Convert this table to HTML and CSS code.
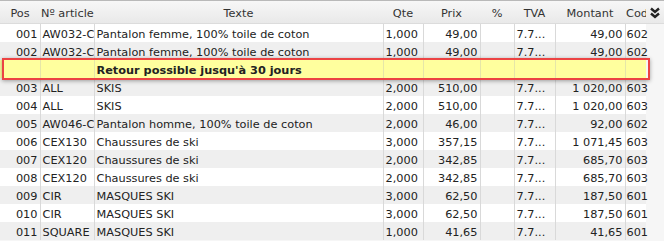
FILE: index.html
```html
<!DOCTYPE html>
<html lang="fr">
<head>
<meta charset="utf-8">
<link rel="stylesheet" href="styles.css">
</head>
<body>
<div class="grid">
  <div class="head">
    <table class="tbl">
      <colgroup><col class="c-pos"><col class="c-art"><col class="c-txt"><col class="c-qte"><col class="c-prix"><col class="c-pct"><col class="c-tva"><col class="c-mnt"><col class="c-code"></colgroup>
      <tr>
        <th>Pos</th><th class="l">Nº article</th><th>Texte</th><th>Qte</th><th>Prix</th><th>%</th><th>TVA</th><th>Montant</th><th class="l">Code</th>
      </tr>
    </table>
    <div class="menu">
      <svg width="12" height="12" viewBox="0 0 12 12"><path d="M2 1.5 L6 5 L10 1.5" fill="none" stroke="#222" stroke-width="2.4"/><path d="M2 6.5 L6 10 L10 6.5" fill="none" stroke="#222" stroke-width="2.4"/></svg>
    </div>
  </div>
  <div class="body">
    <table class="tbl">
      <colgroup><col class="c-pos"><col class="c-art"><col class="c-txt"><col class="c-qte"><col class="c-prix"><col class="c-pct"><col class="c-tva"><col class="c-mnt"><col class="c-code"></colgroup>
      <tr><td class="r">001</td><td>AW032-C</td><td>Pantalon femme, 100% toile de coton</td><td>1,000</td><td class="r">49,00</td><td></td><td>7.7...</td><td class="r">49,00</td><td class="code">602</td></tr>
      <tr class="alt"><td class="r">002</td><td>AW032-C</td><td>Pantalon femme, 100% toile de coton</td><td>1,000</td><td class="r">49,00</td><td></td><td>7.7...</td><td class="r">49,00</td><td class="code">602</td></tr>
      <tr class="note"><td></td><td></td><td class="b">Retour possible jusqu'à 30 jours</td><td></td><td></td><td></td><td></td><td></td><td class="code"></td></tr>
      <tr class="alt"><td class="r">003</td><td>ALL</td><td>SKIS</td><td>2,000</td><td class="r">510,00</td><td></td><td>7.7...</td><td class="r">1 020,00</td><td class="code">603</td></tr>
      <tr><td class="r">004</td><td>ALL</td><td>SKIS</td><td>2,000</td><td class="r">510,00</td><td></td><td>7.7...</td><td class="r">1 020,00</td><td class="code">603</td></tr>
      <tr class="alt"><td class="r">005</td><td>AW046-C</td><td>Pantalon homme, 100% toile de coton</td><td>2,000</td><td class="r">46,00</td><td></td><td>7.7...</td><td class="r">92,00</td><td class="code">602</td></tr>
      <tr><td class="r">006</td><td>CEX130</td><td>Chaussures de ski</td><td>3,000</td><td class="r">357,15</td><td></td><td>7.7...</td><td class="r">1 071,45</td><td class="code">603</td></tr>
      <tr class="alt"><td class="r">007</td><td>CEX120</td><td>Chaussures de ski</td><td>2,000</td><td class="r">342,85</td><td></td><td>7.7...</td><td class="r">685,70</td><td class="code">603</td></tr>
      <tr><td class="r">008</td><td>CEX120</td><td>Chaussures de ski</td><td>2,000</td><td class="r">342,85</td><td></td><td>7.7...</td><td class="r">685,70</td><td class="code">603</td></tr>
      <tr class="alt"><td class="r">009</td><td>CIR</td><td>MASQUES SKI</td><td>3,000</td><td class="r">62,50</td><td></td><td>7.7...</td><td class="r">187,50</td><td class="code">601</td></tr>
      <tr><td class="r">010</td><td>CIR</td><td>MASQUES SKI</td><td>3,000</td><td class="r">62,50</td><td></td><td>7.7...</td><td class="r">187,50</td><td class="code">601</td></tr>
      <tr class="alt"><td class="r">011</td><td>SQUARE</td><td>MASQUES SKI</td><td>1,000</td><td class="r">41,65</td><td></td><td>7.7...</td><td class="r">41,65</td><td class="code">601</td></tr>
    </table>
    <div class="highlight"></div>
  </div>
</div>
</body>
</html>
```
FILE: styles.css
```css
html, body { margin: 0; padding: 0; background: #f6f6f6; }
.grid {
  width: 664px;
  height: 241px;
  overflow: hidden;
  font-family: "DejaVu Sans", Verdana, sans-serif;
  font-size: 11.3px;
  color: #222;
  background: #f6f6f6;
}
.head {
  display: flex;
  height: 24px;
  border-top: 1px solid #b9b9b9;
  box-sizing: border-box;
  background: linear-gradient(#f7f7f7, #e9e9e9);
  border-bottom: 1px solid #dcdcdc;
}
.menu {
  flex: 1;
  display: flex;
  justify-content: center;
  padding-top: 6px;
}
.tbl {
  table-layout: fixed;
  border-collapse: collapse;
  width: 646px;
}
.c-pos { width: 40px; }
.c-art { width: 54px; }
.c-txt { width: 289px; }
.c-qte { width: 40px; }
.c-prix { width: 57px; }
.c-pct { width: 34px; }
.c-tva { width: 41px; }
.c-mnt { width: 70px; }
.c-code { width: 21px; }
th {
  height: 20px;
  padding: 2px 2px 0;
  font-weight: normal;
  color: #333;
  white-space: nowrap;
  overflow: hidden;
  text-align: center;
}
th.l { text-align: left; padding-left: 1px; }
td {
  height: 15px;
  padding: 3px 2px 0;
  white-space: nowrap;
  overflow: hidden;
  text-overflow: clip;
  border-left: 1px solid #d9d9d9;
  background: #fff;
  line-height: 15px;
}
td:first-child { border-left: none; }
td.r { text-align: right; }
td.b { font-weight: bold; }
td.code { padding-left: 1px; padding-right: 0; overflow: visible; }
tr.alt td { background: #efefef; }
tr.note td { background: #ffff9e; border-left-color: #e6e6a8; }
.body { position: relative; }
.highlight {
  position: absolute;
  left: 2px;
  top: 34px;
  width: 644px;
  height: 18px;
  border: 2px solid #ec4343;
  box-shadow: 0 1px 4px rgba(0,0,0,0.35);
  pointer-events: none;
}
```
